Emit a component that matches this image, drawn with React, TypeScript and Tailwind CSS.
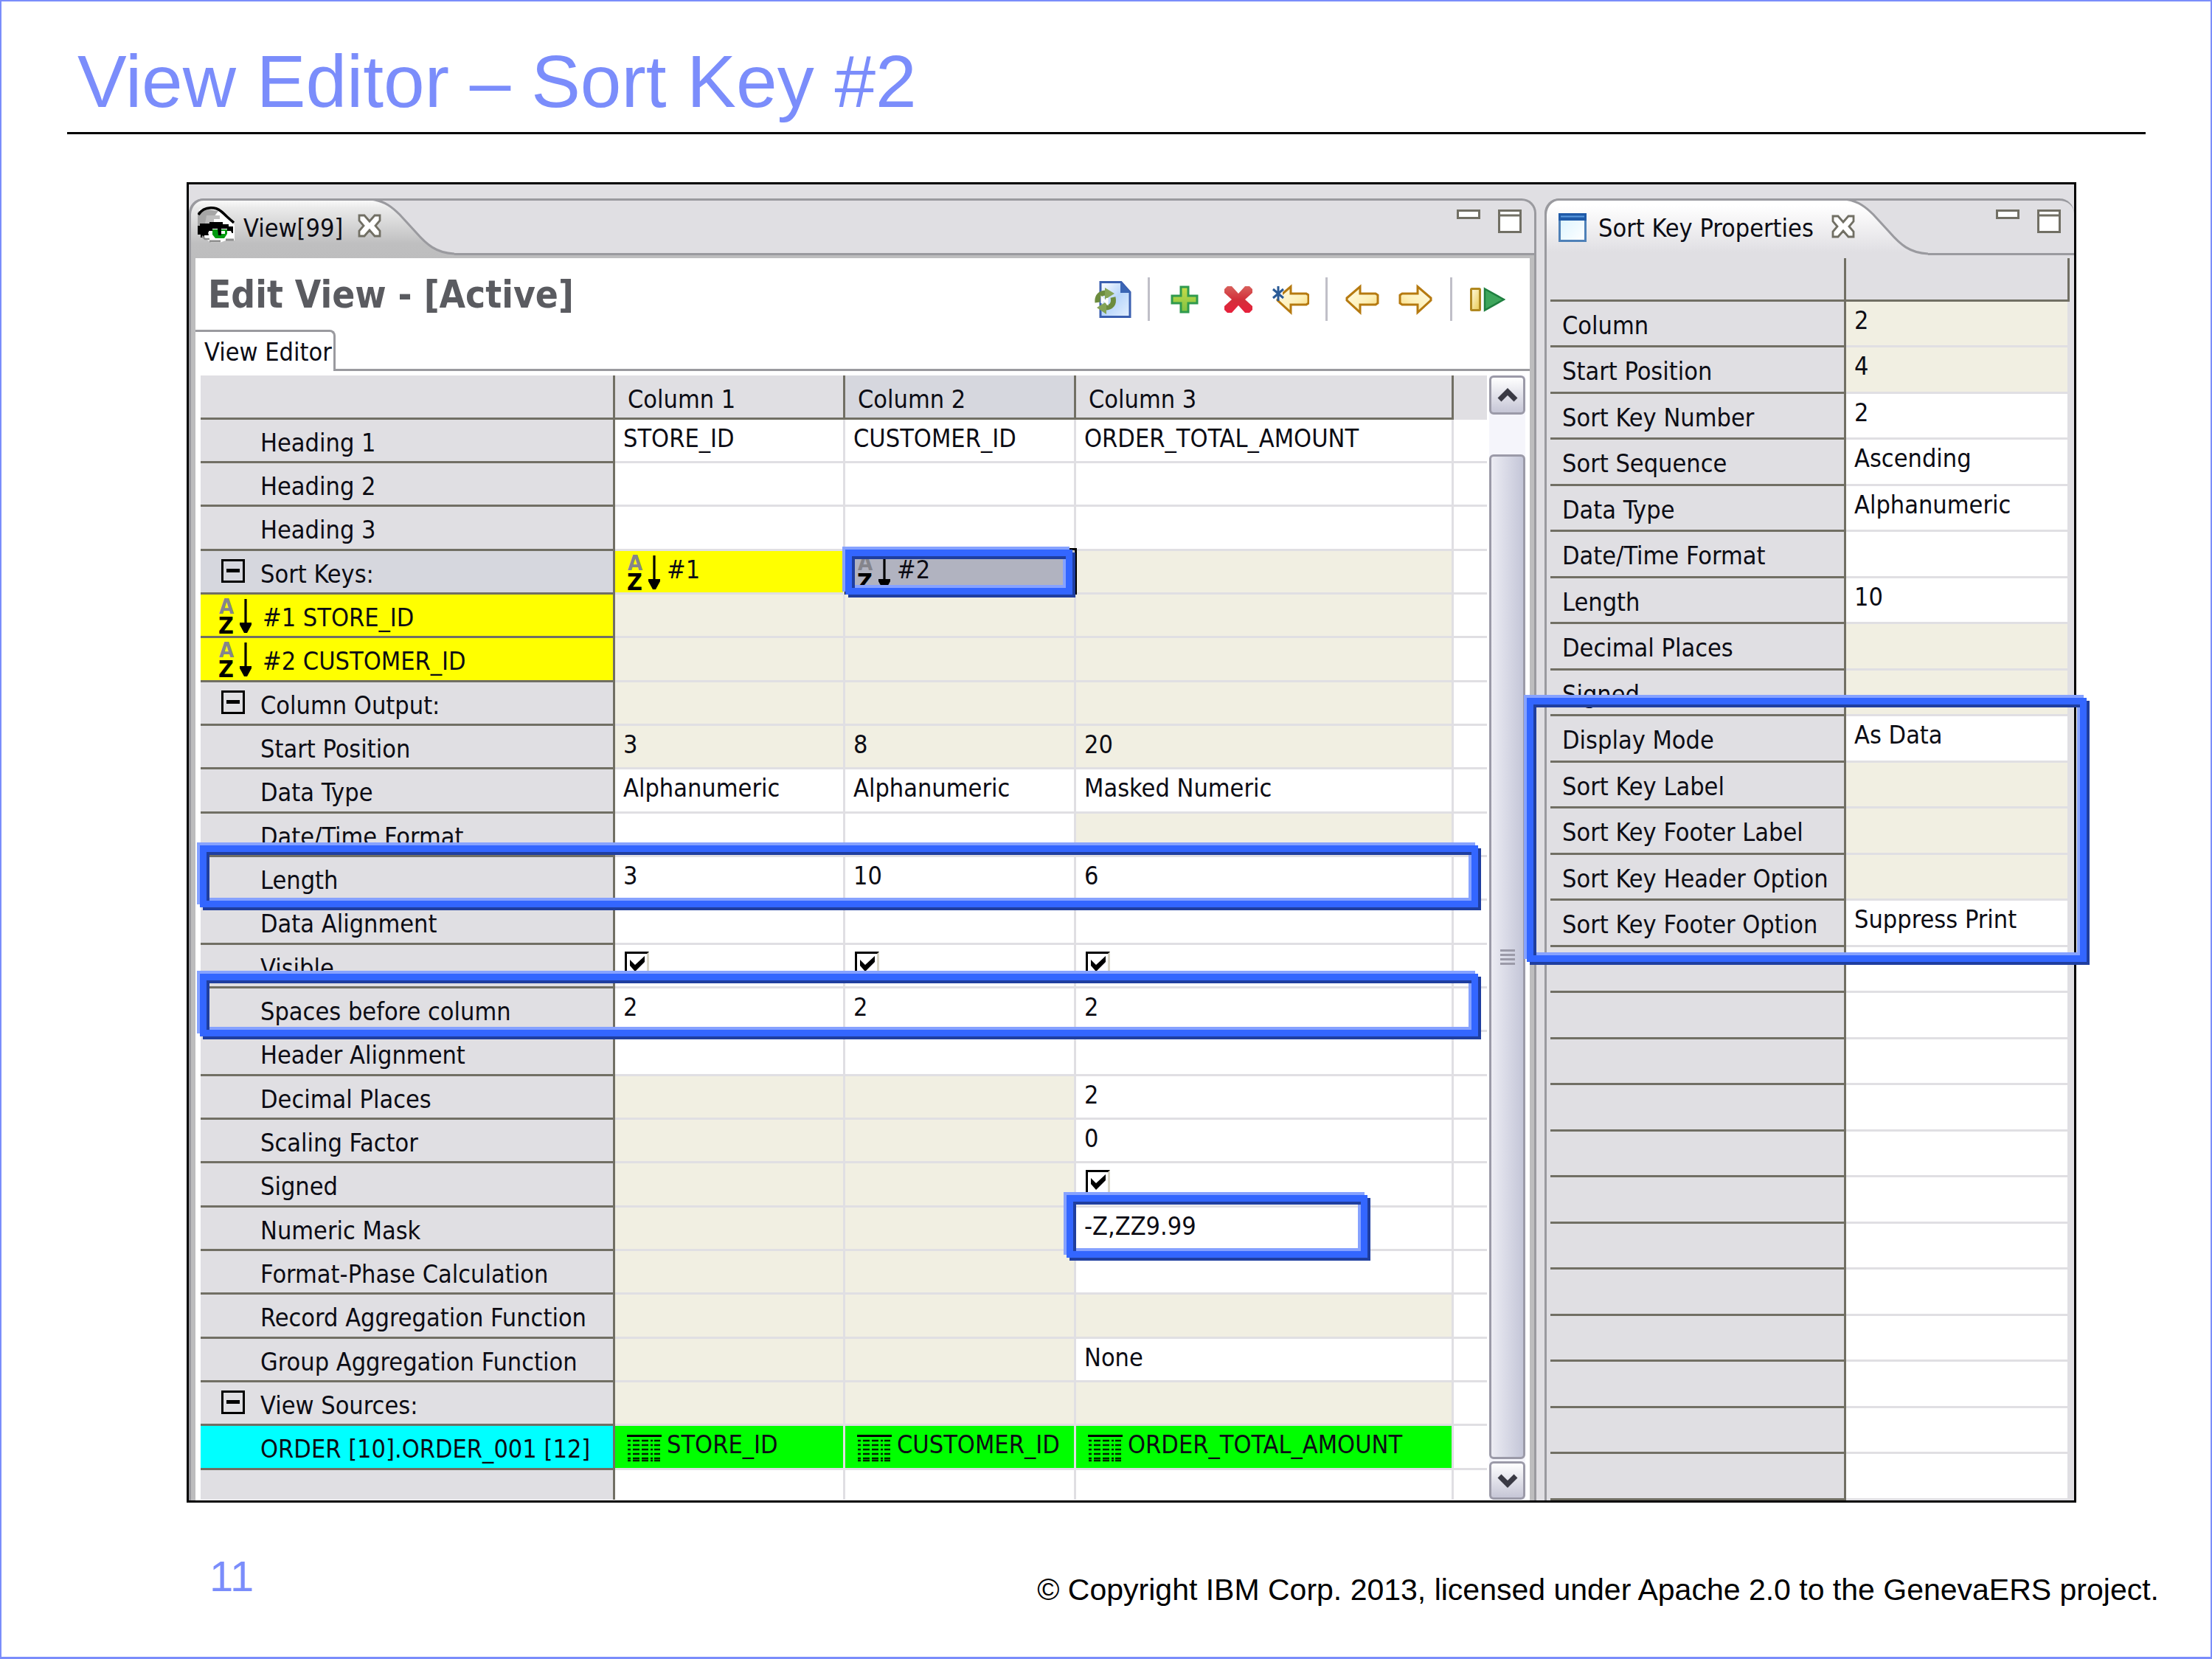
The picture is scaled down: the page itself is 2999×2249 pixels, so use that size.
import type { ReactNode } from "react";

type Tone = "plain" | "off" | "key" | "picked" | "source";
type Cell = { tone: Tone; text?: string; icon?: "sort" | "grid"; check?: boolean };
type Row = { label: string; mark?: "group" | "sort" | "source"; cells: Cell[] };

const v = (text = ""): Cell => ({ tone: "plain", text });
const off = (text = ""): Cell => ({ tone: "off", text });
const check: Cell = { tone: "plain", check: true };
const src = (text: string): Cell => ({ tone: "source", text, icon: "grid" });

const rows: Row[] = [
  { label: "Heading 1", cells: [v("STORE_ID"), v("CUSTOMER_ID"), v("ORDER_TOTAL_AMOUNT")] },
  { label: "Heading 2", cells: [v(), v(), v()] },
  { label: "Heading 3", cells: [v(), v(), v()] },
  {
    label: "Sort Keys:",
    mark: "group",
    cells: [{ tone: "key", text: "#1", icon: "sort" }, { tone: "picked", text: "#2", icon: "sort" }, off()],
  },
  { label: "#1 STORE_ID", mark: "sort", cells: [off(), off(), off()] },
  { label: "#2 CUSTOMER_ID", mark: "sort", cells: [off(), off(), off()] },
  { label: "Column Output:", mark: "group", cells: [off(), off(), off()] },
  { label: "Start Position", cells: [off("3"), off("8"), off("20")] },
  { label: "Data Type", cells: [v("Alphanumeric"), v("Alphanumeric"), v("Masked Numeric")] },
  { label: "Date/Time Format", cells: [v(), v(), off()] },
  { label: "Length", cells: [v("3"), v("10"), v("6")] },
  { label: "Data Alignment", cells: [v(), v(), v()] },
  { label: "Visible", cells: [check, check, check] },
  { label: "Spaces before column", cells: [v("2"), v("2"), v("2")] },
  { label: "Header Alignment", cells: [v(), v(), v()] },
  { label: "Decimal Places", cells: [off(), off(), v("2")] },
  { label: "Scaling Factor", cells: [off(), off(), v("0")] },
  { label: "Signed", cells: [off(), off(), check] },
  { label: "Numeric Mask", cells: [off(), off(), v("-Z,ZZ9.99")] },
  { label: "Format-Phase Calculation", cells: [off(), off(), v()] },
  { label: "Record Aggregation Function", cells: [off(), off(), off()] },
  { label: "Group Aggregation Function", cells: [off(), off(), v("None")] },
  { label: "View Sources:", mark: "group", cells: [off(), off(), off()] },
  {
    label: "ORDER [10].ORDER_001 [12]",
    mark: "source",
    cells: [src("STORE_ID"), src("CUSTOMER_ID"), src("ORDER_TOTAL_AMOUNT")],
  },
];

const properties: { label: string; value?: string; off?: boolean }[] = [
  { label: "Column", value: "2", off: true },
  { label: "Start Position", value: "4", off: true },
  { label: "Sort Key Number", value: "2" },
  { label: "Sort Sequence", value: "Ascending" },
  { label: "Data Type", value: "Alphanumeric" },
  { label: "Date/Time Format" },
  { label: "Length", value: "10" },
  { label: "Decimal Places", off: true },
  { label: "Signed", off: true },
  { label: "Display Mode", value: "As Data" },
  { label: "Sort Key Label", off: true },
  { label: "Sort Key Footer Label", off: true },
  { label: "Sort Key Header Option", off: true },
  { label: "Sort Key Footer Option", value: "Suppress Print" },
  ...Array.from({ length: 12 }, () => ({ label: "" })),
];

const tones: Record<Tone, string> = {
  plain: "bg-white",
  off: "bg-[#f1efe2]",
  key: "bg-[#ffff00]",
  picked: "bg-[#b1b3c0]",
  source: "bg-[#00ff00]",
};

/* ---------- icons ---------- */

function EyeIcon() {
  return (
    <svg viewBox="0 0 50 50" className="size-[50px] shrink-0" aria-hidden="true">
      <path d="M2 4 16 1 30 3 42 14 50 25V46H38L30 49H18L6 40 0 34Z" fill="#fff" />
      <path d="M2 6 14 4 28 6 22 14 12 18 10 25 0 26V8Z" fill="#a6a6a6" />
      <path d="M12 12h18v5h-8v6H10z" fill="#bdbdbd" />
      <path d="M1 11C6 3 14 1 22 2C31 3 35 10 40 14L49 22" fill="none" stroke="#000" strokeWidth="3.5" />
      <path d="M0 26h3v-3h13v-2h18v3h8v3h6v9h-3v-3h-5v-3H20v3h-5v6H9v3H4v-4H0z" fill="#000" />
      <path d="M14 35h6v8h-4zM38 34h8v5h-6z" fill="#fff" />
      <path d="M20 31h20v6l-4 6H24l-4-5z" fill="#009a10" />
      <path d="M27 30h5v9h-4z" fill="#000" />
      <path d="M32 33h5v4h-5z" fill="#fff" />
      <path d="M16 47h15M38 45h11" stroke="#8e8e8e" strokeWidth="3" />
      <path d="M6 40l4 4h6" fill="none" stroke="#8e8e8e" strokeWidth="2.5" />
    </svg>
  );
}

function CloseIcon() {
  return (
    <svg viewBox="0 0 32 32" className="size-8" aria-hidden="true">
      <path
        d="M2 2h7l7 8 7-8h7v7l-6 7 6 7v7h-7l-7-8-7 8H2v-7l6-7-6-7z"
        fill="#fff"
        stroke="#716f64"
        strokeWidth="2.8"
      />
    </svg>
  );
}

function WindowIcon() {
  return (
    <svg viewBox="0 0 38 39" className="h-[39px] w-[38px] shrink-0" aria-hidden="true">
      <defs>
        <linearGradient id="win" x1="0" y1="0" x2="1" y2="1">
          <stop offset="0" stopColor="#d9f3ff" />
          <stop offset="1" stopColor="#fff" />
        </linearGradient>
      </defs>
      <rect x="1.5" y="1.5" width="35" height="36" fill="url(#win)" stroke="#4f81b8" strokeWidth="3" />
      <rect width="38" height="10" fill="#1f5aa8" />
      <path d="M3 4.5h32" stroke="#5a9ae0" strokeWidth="2" />
    </svg>
  );
}

function MinimizeIcon() {
  return (
    <svg viewBox="0 0 32 32" className="size-8" aria-hidden="true">
      <rect x="1.5" y="1.5" width="29" height="10" fill="#fff" stroke="#716f64" strokeWidth="3" />
    </svg>
  );
}

function MaximizeIcon() {
  return (
    <svg viewBox="0 0 32 32" className="size-8" aria-hidden="true">
      <rect x="1.5" y="1.5" width="29" height="29" fill="#fff" stroke="#716f64" strokeWidth="3" />
      <path d="M2 8h28" stroke="#716f64" strokeWidth="3" />
    </svg>
  );
}

function SortIcon() {
  return (
    <svg viewBox="0 0 48 48" className="size-12 shrink-0" aria-hidden="true">
      <g fontFamily="DejaVu Sans Condensed" fontWeight="700">
        <text x="1" y="21" fontSize="29" fill="#85858c">
          A
        </text>
        <text x="0" y="48" fontSize="32" fill="#000">
          Z
        </text>
      </g>
      <path d="M37 1v34" stroke="#000" strokeWidth="3.2" />
      <path d="M29 33h16v3l-6 11h-4l-6-11z" fill="#000" />
    </svg>
  );
}

function GridIcon() {
  return (
    <svg viewBox="0 0 48 37" className="h-[37px] w-12 shrink-0" aria-hidden="true">
      <path d="M0 1.5h47" stroke="#000" strokeWidth="3" />
      {[8, 14, 20, 26, 32, 35].map((y) => (
        <path
          key={y}
          d={`M1 ${y}h4M8 ${y}h9M20 ${y}h9M32 ${y}h3M37 ${y}h8`}
          stroke="#000"
          strokeOpacity="0.85"
          strokeWidth="2.6"
        />
      ))}
    </svg>
  );
}

function CollapseIcon() {
  return (
    <svg viewBox="0 0 32 32" className="size-8" aria-hidden="true">
      <rect x="1.5" y="1.5" width="29" height="29" fill="none" stroke="#000" strokeWidth="3" />
      <path d="M7 15.500h18" stroke="#000" strokeWidth="5" />
    </svg>
  );
}

function RefreshIcon() {
  return (
    <svg viewBox="0 0 50 50" className="size-[50px]" aria-hidden="true">
      <defs>
        <linearGradient id="page" x1="0" y1="0" x2="1" y2="1">
          <stop offset="0" stopColor="#fff" />
          <stop offset="0.5" stopColor="#b9d6fb" />
          <stop offset="1" stopColor="#e4f0ff" />
        </linearGradient>
      </defs>
      <path d="M8 1.500H36L48 15V48.500H8Z" fill="url(#page)" stroke="#3a5fb0" strokeWidth="3" />
      <path d="M35 1 49 16H35Z" fill="#3b66b5" />
      <path d="M4 29C3 20 8 16 16 16" fill="none" stroke="#6c8c3e" strokeWidth="7" />
      <path d="M14 9 27 17 14 25Z" fill="#84a356" />
      <path d="M25 22C27 31 23 36 14 36" fill="none" stroke="#6c8c3e" strokeWidth="7" />
      <path d="M16 28V45L3 36Z" fill="#84a356" />
      <path d="M10 30V23L17 30V23" fill="none" stroke="#fff" strokeWidth="3" />
    </svg>
  );
}

function AddIcon() {
  return (
    <svg viewBox="0 0 50 50" className="size-[50px]" aria-hidden="true">
      <defs>
        <linearGradient id="add" x1="0" y1="0" x2="0" y2="1">
          <stop offset="0" stopColor="#c8dc4a" />
          <stop offset="1" stopColor="#7fc242" />
        </linearGradient>
      </defs>
      <path
        d="M20 8h10v12h12v10H30v12H20V30H8V20h12z"
        fill="url(#add)"
        stroke="#2f9a4e"
        strokeWidth="3"
      />
    </svg>
  );
}

function DeleteIcon() {
  return (
    <svg viewBox="0 0 50 50" className="size-[50px]" aria-hidden="true">
      <defs>
        <linearGradient id="del" x1="0" y1="0" x2="0" y2="1">
          <stop offset="0" stopColor="#d8605c" />
          <stop offset="0.5" stopColor="#d2303a" />
          <stop offset="1" stopColor="#e8203c" />
        </linearGradient>
      </defs>
      <path
        d="M11 7h6l9 10 9-10h6l4 4v5l-10 9 10 9v5l-4 4h-6l-9-10-9 10h-6l-4-4v-5l10-9-10-9v-5z"
        fill="url(#del)"
      />
    </svg>
  );
}

function ArrowShape() {
  return (
    <>
      <defs>
        <linearGradient id="arrow" x1="0" y1="0" x2="1" y2="1">
          <stop offset="0" stopColor="#fffbe8" />
          <stop offset="0.6" stopColor="#fdf0b8" />
          <stop offset="1" stopColor="#f8d470" />
        </linearGradient>
      </defs>
      <path
        d="M22 7.500V17H43L46 19V30L43 32H22V42.500L4 26V23Z"
        fill="url(#arrow)"
        stroke="#b67a10"
        strokeWidth="3"
      />
    </>
  );
}

function BackIcon() {
  return (
    <svg viewBox="0 0 50 50" className="size-[50px]" aria-hidden="true">
      <ArrowShape />
    </svg>
  );
}

function ForwardIcon() {
  return (
    <svg viewBox="0 0 50 50" className="size-[50px] -scale-x-100" aria-hidden="true">
      <ArrowShape />
    </svg>
  );
}

function NewBackIcon() {
  return (
    <svg viewBox="0 0 50 50" className="size-[50px]" aria-hidden="true">
      <g transform="translate(3 0)">
        <ArrowShape />
      </g>
      <path d="M0 7h14v17H0z" fill="#fff" />
      <path d="M8 7v20M1 11l14 12M15 11L1 23" stroke="#2a5a96" strokeWidth="3" />
    </svg>
  );
}

function RunIcon() {
  return (
    <svg viewBox="0 0 50 50" className="size-[50px]" aria-hidden="true">
      <defs>
        <linearGradient id="bar" x1="0" y1="0" x2="1" y2="1">
          <stop offset="0" stopColor="#fffbe0" />
          <stop offset="1" stopColor="#e8c850" />
        </linearGradient>
      </defs>
      <rect x="3.500" y="10.500" width="12" height="29" rx="1" fill="url(#bar)" stroke="#b08820" strokeWidth="3" />
      <path d="M22 10.500 48 25 22 39.500Z" fill="#3ea65c" stroke="#1f7f40" strokeWidth="2.500" />
    </svg>
  );
}

function Chevron({ down = false }: { down?: boolean }) {
  return (
    <svg viewBox="0 0 28 20" className="h-5 w-7" aria-hidden="true">
      <path d={down ? "M3 4 14 15 25 4" : "M3 16 14 5 25 16"} fill="none" stroke="#3a3a44" strokeWidth="7" />
    </svg>
  );
}

/* ---------- parts ---------- */

function Marker({ place }: { place: string }) {
  return (
    <div className={`pointer-events-none absolute ${place}`} aria-hidden="true">
      <div className="absolute inset-0 -translate-x-1 -translate-y-1 border-[9px] border-[#86a2ff]" />
      <div className="absolute inset-0 translate-x-1 translate-y-1 border-[9px] border-[#1f3e9f]" />
      <div className="absolute inset-0 border-[9px] border-[#3366ff]" />
    </div>
  );
}

function PaneButtons() {
  return (
    <div className="ml-auto flex gap-6 pt-3">
      <button type="button" aria-label="Minimize" className="size-8">
        <MinimizeIcon />
      </button>
      <button type="button" aria-label="Maximize" className="size-8">
        <MaximizeIcon />
      </button>
    </div>
  );
}

function ToolButton({ name, children }: { name: string; children: ReactNode }) {
  return (
    <button type="button" aria-label={name} className="size-[50px]">
      {children}
    </button>
  );
}

function ToolRule() {
  return <span className="h-[59px] w-[3px] bg-[#c0bfc8]" />;
}

function LabelCell({ row, height }: { row: Row; height: string }) {
  const base = `${height} border-r-[3px] border-b-[3px] border-[#716f64] p-0 text-left align-top font-normal`;
  if (row.mark === "sort")
    return (
      <th scope="row" className={`${base} bg-[#ffff00]`}>
        <div className="flex gap-3 pt-[5px] pl-6">
          <SortIcon />
          <span className="pt-[6px]">{row.label}</span>
        </div>
      </th>
    );
  if (row.mark === "group")
    return (
      <th scope="row" className={`${base} ${row.label === "Sort Keys:" ? "bg-[#d6d7de]" : "bg-[#e0dfe3]"}`}>
        <div className="flex gap-[21px] pt-[11px] pl-7">
          <button type="button" aria-label={`Collapse ${row.label}`} className="size-8">
            <CollapseIcon />
          </button>
          <span>{row.label}</span>
        </div>
      </th>
    );
  return (
    <th
      scope="row"
      className={`${base} pt-[11px] pl-[81px] whitespace-nowrap ${row.mark === "source" ? "bg-[#00ffff]" : "bg-[#e0dfe3]"}`}
    >
      {row.label}
    </th>
  );
}

function DataCell({ cell, name }: { cell: Cell; name: string }) {
  return (
    <td className={`border-r-[3px] border-b-[3px] border-[#e0dfe3] p-0 align-top ${tones[cell.tone]}`}>
      {cell.check ? (
        <label className="flex pt-[9px] pl-[13px]">
          <input
            type="checkbox"
            defaultChecked
            aria-label={name}
            className="peer size-[33px] appearance-none border-[3px] border-t-black border-r-[#d9d6c8] border-b-[#d9d6c8] border-l-black bg-white"
          />
          <svg viewBox="0 0 33 33" className="-ml-[33px] hidden size-[33px] peer-checked:block" aria-hidden="true">
            <path d="M7 11v8l7 8 13-13V6L14 18Z" fill="#000" />
          </svg>
        </label>
      ) : cell.icon ? (
        <div className="flex gap-[6px] pt-[5px] pl-4">
          {cell.icon === "sort" ? (
            <SortIcon />
          ) : (
            <span className="pt-[7px]">
              <GridIcon />
            </span>
          )}
          <span className="whitespace-nowrap">{cell.text}</span>
        </div>
      ) : (
        <div className="pt-[5px] pl-[11px] whitespace-nowrap">{cell.text}</div>
      )}
    </td>
  );
}

function EditorTable() {
  const head = "h-[60px] border-r-[3px] border-b-[3px] border-[#716f64] p-0 pt-[12px] pl-[17px] text-left align-top font-normal";
  return (
    <table className="w-full table-fixed border-separate border-spacing-0">
      <colgroup>
        <col className="w-[562px]" />
        <col className="w-[312px]" />
        <col className="w-[313px]" />
        <col />
        <col className="w-[45px]" />
      </colgroup>
      <thead>
        <tr>
          <td className={`${head} bg-[#e0dfe3]`} />
          <th scope="col" className={`${head} bg-[#e0dfe3]`}>
            Column 1
          </th>
          <th scope="col" className={`${head} bg-[#d6d7de]`}>
            Column 2
          </th>
          <th scope="col" className={`${head} bg-[#e0dfe3]`}>
            Column 3
          </th>
          <td className="bg-[#e0dfe3] p-0" />
        </tr>
      </thead>
      <tbody>
        {rows.map((row, i) => (
          <tr key={row.label}>
            <LabelCell row={row} height={i % 3 === 2 ? "h-[60px]" : "h-[59px]"} />
            {row.cells.map((cell, c) => (
              <DataCell key={c} cell={cell} name={`${row.label}, column ${c + 1}`} />
            ))}
            <td className="border-b-[3px] border-[#e0dfe3] p-0" />
          </tr>
        ))}
        <tr>
          <td className="h-10 border-r-[3px] border-[#716f64] bg-[#e0dfe3] p-0" />
          <td className="border-r-[3px] border-[#e0dfe3] p-0" />
          <td className="border-r-[3px] border-[#e0dfe3] p-0" />
          <td className="border-r-[3px] border-[#e0dfe3] p-0" />
          <td className="p-0" />
        </tr>
      </tbody>
    </table>
  );
}

function ScrollBar() {
  const face =
    "flex items-center justify-center rounded-[6px] border-[3px] border-[#9b9aa8] bg-linear-to-b from-white to-[#c6c6d6]";
  return (
    <div className="flex w-[49px] shrink-0 flex-col bg-[#f5f5fb]">
      <button type="button" aria-label="Scroll up" className={`${face} h-[53px]`}>
        <Chevron />
      </button>
      <div className="mt-[54px] mb-[3px] flex flex-1 flex-col items-center justify-center gap-[3px] rounded-[6px] border-[3px] border-[#9b9aa8] bg-linear-to-r from-[#ececf3] to-[#c4c6d8]">
        <span className="h-[3px] w-5 bg-[#9b9aa8]" />
        <span className="h-[3px] w-5 bg-[#9b9aa8]" />
        <span className="h-[3px] w-5 bg-[#9b9aa8]" />
        <span className="h-[3px] w-5 bg-[#9b9aa8]" />
      </div>
      <button type="button" aria-label="Scroll down" className={`${face} h-[52px]`}>
        <Chevron down />
      </button>
    </div>
  );
}

function EditorPane() {
  return (
    <section className="mt-[19px] flex min-w-0 flex-1 flex-col rounded-t-[20px] border-x-[3px] border-t-[3px] border-[#9a9a9f] bg-[#e0dfe3]">
      <header className="flex h-[74px] border-b-[3px] border-[#9a9a9f] pr-[17px]">
        <div className="relative flex h-[77px] w-[360px] shrink-0 items-start">
          <svg viewBox="0 0 360 81" className="absolute -top-[3px] -left-[3px] h-[81px] w-[360px]" aria-hidden="true">
            <defs>
              <linearGradient id="tabA" x1="0" y1="0" x2="0" y2="1">
                <stop offset="0" stopColor="#fbfbfb" />
                <stop offset="0.15" stopColor="#eaeaea" />
                <stop offset="0.75" stopColor="#bfbfc0" />
                <stop offset="1" stopColor="#bdbdbe" />
              </linearGradient>
            </defs>
            <path
              d="M1.500 81V22C2 10 10 1.500 20 1.500H250C266 4 276 12 286 22L308 46C322 62 335 74 360 75V81Z"
              fill="url(#tabA)"
            />
            <path
              d="M1.500 81V22C2 10 10 1.500 20 1.500H250C266 4 276 12 286 22L308 46C322 62 335 74 360 75"
              fill="none"
              stroke="#9a9a9f"
              strokeWidth="3"
            />
          </svg>
          <div className="relative flex items-start pt-2 pl-[9px]">
            <EyeIcon />
            <span className="ml-3 pt-[9px]">View[99]</span>
            <button type="button" aria-label="Close View[99]" className="mt-[10px] ml-5 size-8">
              <CloseIcon />
            </button>
          </div>
        </div>
        <PaneButtons />
      </header>
      <div className="flex flex-1 flex-col border-x-[6px] border-t-[4px] border-[#bdbdbe] bg-white">
        <div className="flex h-[97px] items-start pt-5 pr-[33px] pl-[17px]">
          <h2 className="text-[51px] leading-[60px] font-bold whitespace-nowrap text-[#5a5b60]">Edit View - [Active]</h2>
          <div className="ml-auto flex items-center gap-[22px] pt-[6px]">
            <ToolButton name="Refresh">
              <RefreshIcon />
            </ToolButton>
            <ToolRule />
            <ToolButton name="Add column">
              <AddIcon />
            </ToolButton>
            <ToolButton name="Delete column">
              <DeleteIcon />
            </ToolButton>
            <ToolButton name="Insert column before">
              <NewBackIcon />
            </ToolButton>
            <ToolRule />
            <ToolButton name="Move left">
              <BackIcon />
            </ToolButton>
            <ToolButton name="Move right">
              <ForwardIcon />
            </ToolButton>
            <ToolRule />
            <ToolButton name="Activate view">
              <RunIcon />
            </ToolButton>
          </div>
        </div>
        <div className="flex h-14">
          <button
            type="button"
            className="w-[190px] shrink-0 rounded-tr-[8px] border-t-[3px] border-r-[3px] border-[#9a9a9f] pl-3 text-left whitespace-nowrap"
          >
            View Editor
          </button>
          <div className="flex-1 border-b-[3px] border-[#9a9a9f]" />
        </div>
        <div className="flex pt-[6px] pr-[6px] pl-[7px]">
          <div className="mr-[3px] min-w-0 flex-1">
            <EditorTable />
          </div>
          <ScrollBar />
        </div>
      </div>
    </section>
  );
}

function PropertiesPane() {
  return (
    <section className="mt-[19px] ml-[11px] flex w-[718px] shrink-0 flex-col bg-[#e0dfe3]">
      <header className="flex h-[77px] rounded-t-[20px] border-t-[3px] border-l-[3px] border-[#9a9a9f]">
        <div className="relative w-[516px] shrink-0">
          <svg viewBox="0 0 520 81" className="absolute -top-[3px] -left-[3px] h-[81px] w-[520px]" aria-hidden="true">
            <defs>
              <linearGradient id="tabB" x1="0" y1="0" x2="0" y2="1">
                <stop offset="0.100" stopColor="#ffffff" />
                <stop offset="0.900" stopColor="#e0dfe3" />
              </linearGradient>
            </defs>
            <path
              d="M1.500 81V22C2 10 10 1.500 20 1.500H410C426 4 436 12 446 22L468 46C482 62 495 74 520 75V81Z"
              fill="url(#tabB)"
            />
            <path
              d="M1.500 81V22C2 10 10 1.500 20 1.500H410C426 4 436 12 446 22L468 46C482 62 495 74 520 75"
              fill="none"
              stroke="#9a9a9f"
              strokeWidth="3"
            />
          </svg>
          <div className="relative flex items-start pt-[17px] pl-4">
            <WindowIcon />
            <span className="ml-4 whitespace-nowrap">Sort Key Properties</span>
            <button type="button" aria-label="Close Sort Key Properties" className="mt-[2px] ml-6 size-8">
              <CloseIcon />
            </button>
          </div>
        </div>
        <div className="flex flex-1 border-b-[3px] border-[#9a9a9f] pr-[18px]">
          <PaneButtons />
        </div>
      </header>
      <div className="flex-1 border-l-[3px] border-[#9a9a9f] pt-1 pr-[6px] pl-[5px]">
        <table className="w-full table-fixed border-separate border-spacing-0">
          <colgroup>
            <col className="w-[401px]" />
            <col />
          </colgroup>
          <thead>
            <tr>
              <td className="h-[59px] border-r-[3px] border-b-[3px] border-[#716f64] p-0" />
              <td className="border-r-[3px] border-b-[3px] border-[#716f64] p-0" />
            </tr>
          </thead>
          <tbody>
            {properties.map((p, i) => (
              <tr key={i}>
                <th
                  scope="row"
                  className={`border-r-[3px] border-b-[3px] border-[#716f64] p-0 pt-3 pl-4 text-left align-top font-normal whitespace-nowrap ${
                    i % 2 ? "h-[63px]" : "h-[62px]"
                  }`}
                >
                  {p.label}
                </th>
                <td
                  className={`border-r-[3px] border-b-[3px] border-[#e0dfe3] p-0 pt-[5px] pl-[11px] align-top whitespace-nowrap ${
                    p.off ? "bg-[#f1efe2]" : "bg-white"
                  }`}
                >
                  {p.value}
                </td>
              </tr>
            ))}
          </tbody>
        </table>
      </div>
    </section>
  );
}

export default function App() {
  return (
    <div className="flex min-h-screen flex-col border-x-2 border-t-2 border-b-[3px] border-[#7b8dfb] bg-white font-['Liberation_Sans',sans-serif]">
      <header className="mr-[88px] ml-[89px] border-b-[3px] border-black pt-[58px] pb-[19px] pl-[14px]">
        <h1 className="text-[100px] leading-[100px] text-[#7b8dfb]">View Editor – Sort Key #2</h1>
      </header>
      <main className="relative mt-[65px] mr-[182px] ml-[251px] flex border-[3px] border-black bg-[#e0dfe3] font-['DejaVu_Sans_Condensed','DejaVu_Sans',sans-serif] text-[34px] leading-[40px] text-[#0c0c14]">
        <EditorPane />
        <PropertiesPane />
        <div className="pointer-events-none absolute top-[493px] left-[889px] h-[63px] w-[315px] border-[3px] border-black" />
        <Marker place="top-[495px] left-[890px] h-[61px] w-[308px]" />
        <Marker place="top-[896px] right-[808px] left-[15px] h-[84px]" />
        <Marker place="top-[1070px] right-[808px] left-[15px] h-[85px]" />
        <Marker place="top-[1370px] left-[1190px] h-[85px] w-[408px]" />
        <Marker place="top-[696px] -right-[17px] h-[358px] w-[759px]" />
      </main>
      <footer className="mr-[70px] ml-[282px] flex items-start justify-between pt-[68px]">
        <span className="text-[58px] leading-[64px] text-[#7b8dfb]">11</span>
        <p className="pt-[26px] text-[41px] leading-[48px] text-black">
          © Copyright IBM Corp. 2013, licensed under Apache 2.0 to the GenevaERS project.
        </p>
      </footer>
    </div>
  );
}
